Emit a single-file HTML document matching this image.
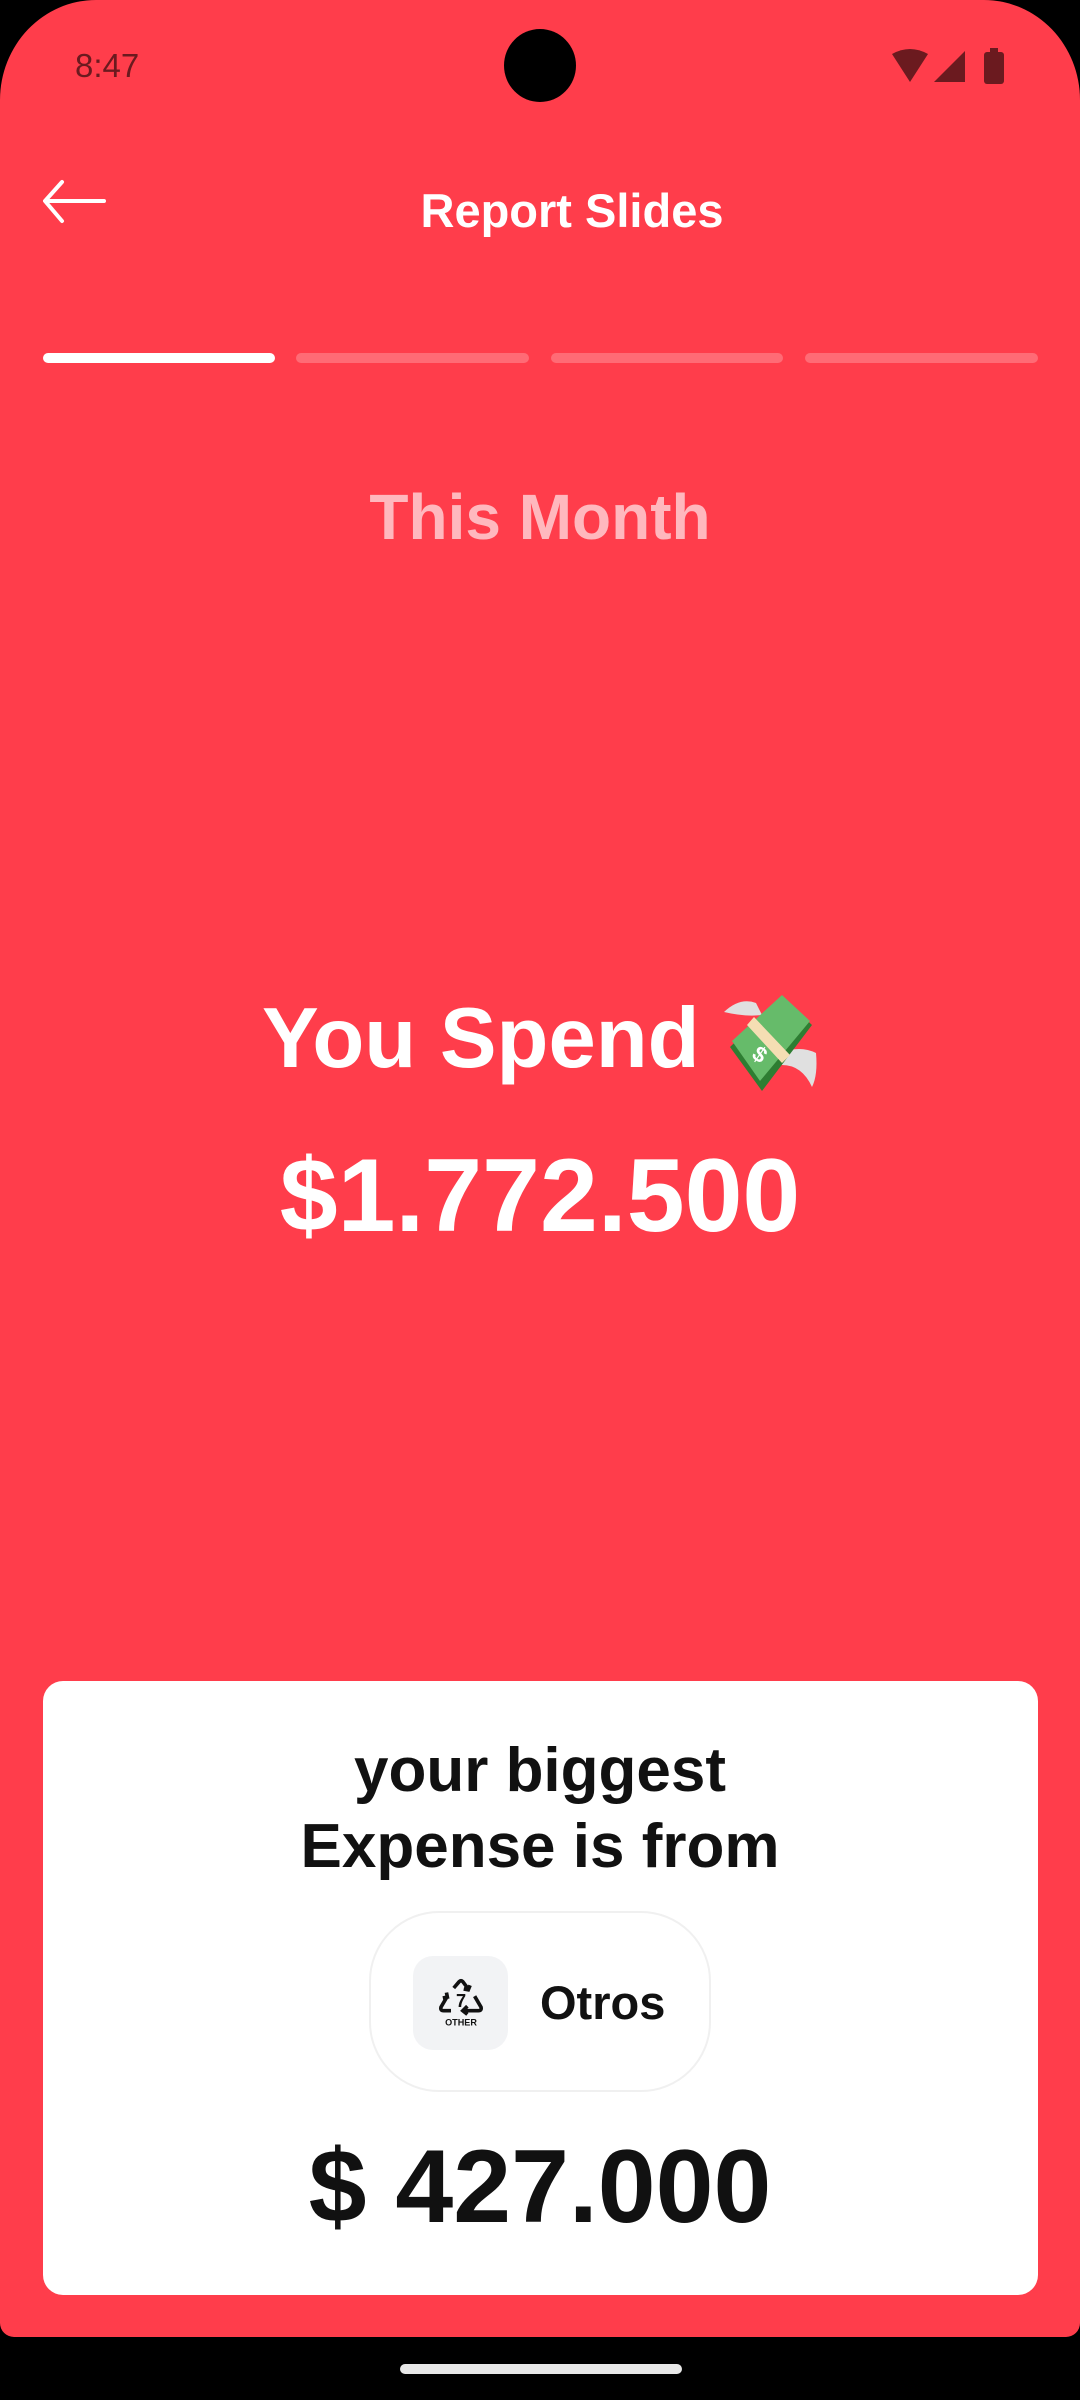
<!DOCTYPE html>
<html><head><meta charset="utf-8">
<style>
*{margin:0;padding:0;box-sizing:border-box}
html,body{width:1080px;height:2400px;background:#000;overflow:hidden;font-family:"Liberation Sans",sans-serif}
.screen{position:absolute;left:0;top:0;width:1080px;height:2337px;background:#FF3D4B;border-radius:96px 96px 14px 14px/100px 100px 14px 14px}
.abs{position:absolute}
.t{position:absolute;left:0;width:1080px;text-align:center;white-space:nowrap;font-weight:bold}
.bar{position:absolute;top:353px;height:10px;border-radius:5px;background:#FF6B75}
</style></head><body>
<div class="screen">
  <div class="abs" style="left:75px;top:47px;font-size:33px;color:#6B1A1F;">8:47</div>
  <div class="abs" style="left:504px;top:29px;width:72px;height:73px;border-radius:50%;background:#000"></div>
  <svg class="abs" style="left:888px;top:48px" width="120" height="38" viewBox="0 0 120 38">
    <path d="M4 6 Q22 -4 40 6 L22 34 Z" fill="#6B1A1F"/>
    <path d="M46 34 L77 34 L77 3 Z" fill="#6B1A1F"/>
    <rect x="96" y="4" width="20" height="32" rx="3" fill="#6B1A1F"/>
    <rect x="102" y="0" width="8" height="6" fill="#6B1A1F"/>
  </svg>
  <svg class="abs" style="left:40px;top:178px" width="70" height="48" viewBox="0 0 70 48">
    <path d="M64 23 H6 M22 4 L5 23 L22 43" stroke="#fff" stroke-width="4" fill="none" stroke-linecap="round" stroke-linejoin="round"/>
  </svg>
  <div class="t" style="top:183px;font-size:47px;color:#fff;left:32px">Report Slides</div>

  <div class="bar" style="left:43px;width:232px;background:#fff"></div>
  <div class="bar" style="left:296px;width:233px"></div>
  <div class="bar" style="left:551px;width:232px"></div>
  <div class="bar" style="left:805px;width:233px"></div>

  <div class="t" style="top:480px;font-size:64px;color:#FFB8BE;">This Month</div>

  <div class="abs" style="left:262px;top:990px;font-size:85px;font-weight:bold;color:#fff;white-space:nowrap">You Spend</div>
  <svg class="abs" style="left:720px;top:995px" width="100" height="100" viewBox="0 0 100 100">
    <path d="M4 17 Q20 2 36 8 L42 20 Q25 22 4 17Z" fill="#e0e0e0"/>
    <path d="M60 58 Q80 50 96 58 Q98 80 92 92 Q82 70 62 70Z" fill="#e0e0e0"/>
    <path d="M10 52 L62 2 L92 30 L42 96 Z" fill="#2e7d32"/>
    <path d="M12 46 L62 0 L90 26 L40 86 Z" fill="#66bb6a"/>
    <path d="M34 22 L70 60 L62 68 L27 30 Z" fill="#f5deb3"/>
    <text x="33" y="66" font-size="22" font-weight="bold" fill="#fff" transform="rotate(35 38 60)" font-family="Liberation Sans">$</text>
  </svg>
  <div class="t" style="top:1137px;font-size:104px;color:#fff">$1.772.500</div>

  <div class="abs" style="left:43px;top:1681px;width:995px;height:614px;background:#fff;border-radius:20px"></div>
  <div class="t" style="top:1733px;font-size:62px;color:#111;line-height:76px;">your biggest<br>Expense is from</div>
  <div class="abs" style="left:369px;top:1911px;width:342px;height:181px;border:2px solid #f0f0f0;border-radius:70px;background:#fff"></div>
  <div class="abs" style="left:413px;top:1956px;width:95px;height:94px;background:#F2F3F5;border-radius:20px"></div>
  <svg class="abs" style="left:438px;top:1978px" width="46" height="50" viewBox="0 0 50 55">
    <path d="M17 11 L23 4 Q25 2 27 4 L33 12 M35 8 L33 13 L28 12" stroke="#111" stroke-width="4" fill="none"/>
    <path d="M10 20 L3 32 Q2 36 6 36 L14 36 M9 16 L10 21 L5 22" stroke="#111" stroke-width="4" fill="none"/>
    <path d="M40 20 L47 32 Q48 36 44 36 L28 36 M32 31 L27 36 L32 40" stroke="#111" stroke-width="4" fill="none"/>
    <text x="25" y="32" text-anchor="middle" font-size="20" font-weight="bold" fill="#111" font-family="Liberation Sans">7</text>
    <text x="25" y="52" text-anchor="middle" font-size="10" font-weight="bold" fill="#111" font-family="Liberation Sans">OTHER</text>
  </svg>
  <div class="abs" style="left:540px;top:1975px;font-size:47px;font-weight:bold;color:#111">Otros</div>
  <div class="t" style="top:2128px;font-size:104px;color:#111">$ 427.000</div>
</div>
<div class="abs" style="left:400px;top:2364px;width:282px;height:10px;border-radius:5px;background:#e8e8e8"></div>
</body></html>
